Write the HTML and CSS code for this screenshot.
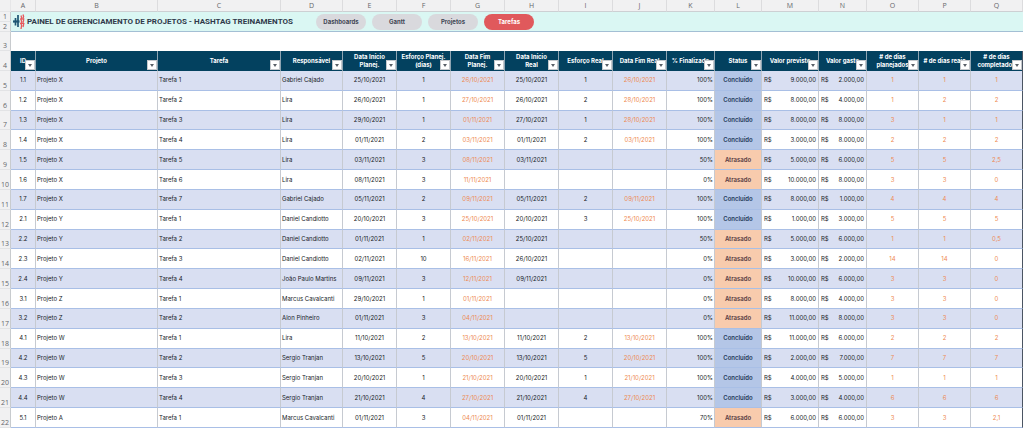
FILE: index.html
```html
<!DOCTYPE html>
<html lang="pt-BR">
<head>
<meta charset="utf-8">
<title>Painel de Gerenciamento de Projetos</title>
<link rel="stylesheet" href="styles.css">
</head>
<body>
<table class="sheet">
  <colgroup>
    <col class="w-num"><col class="w-id"><col class="w-project"><col class="w-task"><col class="w-owner">
    <col class="w-date"><col class="w-date"><col class="w-date"><col class="w-date"><col class="w-date"><col class="w-date">
    <col class="w-percent"><col class="w-status"><col class="w-planned"><col class="w-spent">
    <col class="w-days"><col class="w-days"><col class="w-days">
  </colgroup>
  <thead>
    <tr class="letters" id="letters"><th class="corner"></th></tr>
    <tr class="top"><th class="num">1</th>
      <td class="banner" colspan="17" rowspan="2">
        <div class="bar">
          <svg class="logo" viewBox="0 0 14 18" aria-hidden="true">
            <path d="M3.500 5v7.500M6 2v12" stroke="#1d5673" stroke-width="1.700" fill="none"/>
            <path d="M1 8.500h6.500" stroke="#1d5673" stroke-width="2.200" fill="none"/>
            <path d="M9 2.500l.6 2-.6 2 .6 2-.6 2 .6 2-.6 3.500M11 1.500l.6 2-.6 2 .6 2-.6 2 .6 2-.6 2.500" stroke="#e8585c" stroke-width="1.300" fill="none"/>
            <path d="M8 6h4.500M8 10.500h4.500" stroke="#e8585c" stroke-width="1" fill="none"/>
          </svg>
          <h1>PAINEL DE GERENCIAMENTO DE PROJETOS - HASHTAG TREINAMENTOS</h1>
          <nav>
            <button type="button">Dashboards</button>
            <button type="button">Gantt</button>
            <button type="button">Projetos</button>
            <button type="button" class="active" aria-current="page">Tarefas</button>
          </nav>
        </div>
      </td></tr>
    <tr class="top"><th class="num">2</th></tr>
    <tr class="spacer"><th class="num">3</th><td colspan="17"></td></tr>
    <tr class="heads" id="heads"><th class="num">4</th></tr>
  </thead>
  <tbody id="rows"></tbody>
</table>
<script src="script.js"></script>
</body>
</html>
```
FILE: styles.css
```css
* { box-sizing: border-box; }

body {
  margin: 0;
  padding-right: 1px;
  background: #fff;
  color: #161b26;
  font: 6px/8px Inter, "Liberation Sans", sans-serif;
}

.sheet {
  width: 100%;
  height: 100vh;
  table-layout: fixed;
  border-collapse: separate;
  border-spacing: 0;
}

.w-num { width: 11px; }
.w-id { width: 25px; }
.w-project { width: 122px; }
.w-task { width: 123px; }
.w-owner { width: 62px; }
.w-date { width: 54px; }
.w-percent { width: 48px; }
.w-status { width: 47px; }
.w-planned { width: 57px; }
.w-spent { width: 48px; }
.w-days { width: 52px; }

th, td { padding: 0; white-space: nowrap; }

.letters { height: 12px; }
.letters th {
  background: #f1f1f2;
  border-right: 1px solid #dcdcde;
  border-bottom: 1px solid #cdd0d3;
  color: #66676a;
  font: 7px/10px "Open Sans", sans-serif;
}
.letters .corner { border-color: #e6e6e8; }

.num {
  background: #f1f1f2;
  border-right: 1px solid #c8cbce;
  border-bottom: 1px solid #e2e3e5;
  color: #66676a;
  font: 7px/8px "Open Sans", sans-serif;
  text-align: center;
  vertical-align: bottom;
}

.top { height: 10px; }
.banner { background: #daf7f3; border-bottom: 1px solid #a3bfd4; }
.bar { display: flex; align-items: center; height: 19px; padding-left: 1px; }
.logo { width: 14px; height: 18px; }
h1 {
  width: 265px;
  margin: 0 24px 0 1px;
  color: #303a4a;
  font: 700 8px/10px Roboto, sans-serif;
}
nav { display: flex; gap: 6px; }
nav button {
  width: 50px;
  height: 16px;
  padding: 0;
  border: 0;
  border-radius: 8px;
  background: #d9d9dd;
  color: #3f4654;
  font: 700 6px/8px Inter, sans-serif;
}
nav .active { background: #e0595c; color: #fff; }

.spacer { height: 19px; }

.heads { height: 20px; }
.heads .head {
  position: relative;
  overflow: hidden;
  background: #03415f;
  border-right: 1px solid #8fa5b3;
  color: #fff;
  font-weight: 700;
  text-align: center;
}
.filter {
  position: absolute;
  right: 0;
  bottom: 1px;
  display: grid;
  place-items: center;
  width: 10px;
  height: 10px;
  padding: 0;
  border: 1px solid #c4c8cc;
  background: #fff;
}
.filter::after {
  content: "";
  border: 2px solid transparent;
  border-top: 3px solid #5a6068;
  border-bottom: 0;
}

tbody td {
  border-right: 1px solid #c6cad1;
  border-bottom: 1px solid #a9bfe6;
  text-align: center;
}
tbody tr:nth-child(odd) td { background: #d9dff2; }
tbody .text { padding-left: 1px; text-align: left; }
tbody .percent { padding-right: 1px; text-align: right; }
tbody .calc { color: #ee8a52; }
tbody .done, tbody .late { font-weight: 600; color: #1f3a5a; }
tbody tr .done.done { background: #b4c6e7; }
tbody tr .late.late { background: #f8cbad; color: #553a42; }
.money { display: flex; justify-content: space-between; padding: 0 2px; }
.heads .head:last-child, tbody td:last-child { border-right-color: #4b5563; }
```
FILE: script.js
```js
const heads = ["ID", "Projeto", "Tarefa", "Responsável", "Data Início<br>Planej.", "Esforço Planej.<br>(dias)",
  "Data Fim<br>Planej.", "Data Início<br>Real", "Esforço Real", "Data Fim Real", "% Finalizado", "Status",
  "Valor previsto", "Valor gasto", "# de dias<br>planejados", "# de dias reais", "# de dias<br>completados"];

// id | project | task | owner | start | effort | end | real start | real effort | real end | % | planned | spent | days
const rows = `1.1|X|1|Gabriel Cajado|25/10|1|26/10|25/10|1|26/10|100|9|2|1|1|1
1.2|X|2|Lira|26/10|1|27/10|26/10|2|28/10|100|8|4|1|2|2
1.3|X|3|Lira|29/10|1|01/11|27/10|1|28/10|100|8|8|3|1|1
1.4|X|4|Lira|01/11|2|03/11|01/11|2|03/11|100|3|8|2|2|2
1.5|X|5|Lira|03/11|3|08/11|03/11|||50|5|6|5|5|2,5
1.6|X|6|Lira|08/11|3|11/11||||0|10|8|3|3|0
1.7|X|7|Gabriel Cajado|05/11|2|09/11|05/11|2|09/11|100|8|1|4|4|4
2.1|Y|1|Daniel Candiotto|20/10|3|25/10|20/10|3|25/10|100|1|3|5|5|5
2.2|Y|2|Daniel Candiotto|01/11|1|02/11|25/10|||50|5|6|1|1|0,5
2.3|Y|3|Daniel Candiotto|02/11|10|16/11|26/10|||0|3|2|14|14|0
2.4|Y|4|João Paulo Martins|09/11|3|12/11|09/11|||0|10|6|3|3|0
3.1|Z|1|Marcus Cavalcanti|29/10|1|01/11||||0|8|4|3|3|0
3.2|Z|2|Alon Pinheiro|01/11|3|04/11||||0|11|8|3|3|0
4.1|W|1|Lira|11/10|2|13/10|11/10|2|13/10|100|11|6|2|2|2
4.2|W|2|Sergio Tranjan|13/10|5|20/10|13/10|5|20/10|100|2|7|7|7|7
4.3|W|3|Sergio Tranjan|20/10|1|21/10|20/10|1|21/10|100|4|5|1|1|1
4.4|W|4|Sergio Tranjan|21/10|4|27/10|21/10|4|27/10|100|3|4|6|6|6
5.1|A|1|Marcus Cavalcanti|01/11|3|04/11|01/11|||70|6|6|3|3|2,1`.split("\n").map(line => line.split("|"));

const cell = (content, name = "") => `<td class="${name}">${content}</td>`;
const date = value => value && value + "/2021";
const money = value => `<div class="money"><span>R$</span><span>${value}.000,00</span></div>`;

document.getElementById("letters").insertAdjacentHTML("beforeend",
  [..."ABCDEFGHIJKLMNOPQ"].map(letter => `<th>${letter}</th>`).join(""));

document.getElementById("heads").insertAdjacentHTML("beforeend", heads.map(label =>
  `<th class="head" scope="col">${label}<button type="button" class="filter" aria-label="Filtrar ${label.replace("<br>", " ")}"></button></th>`).join(""));

document.getElementById("rows").innerHTML = rows.map((r, i) => {
  const done = r[10] === "100";
  return `<tr><th class="num">${i + 5}</th>` + [
    cell(r[0]), cell("Projeto " + r[1], "text"), cell("Tarefa " + r[2], "text"), cell(r[3], "text"),
    cell(date(r[4])), cell(r[5]), cell(date(r[6]), "calc"), cell(date(r[7])), cell(r[8]), cell(date(r[9]), "calc"),
    cell(r[10] + "%", "percent"), cell(done ? "Concluído" : "Atrasado", done ? "done" : "late"),
    cell(money(r[11])), cell(money(r[12])), cell(r[13], "calc"), cell(r[14], "calc"), cell(r[15], "calc")
  ].join("") + "</tr>";
}).join("");
```
